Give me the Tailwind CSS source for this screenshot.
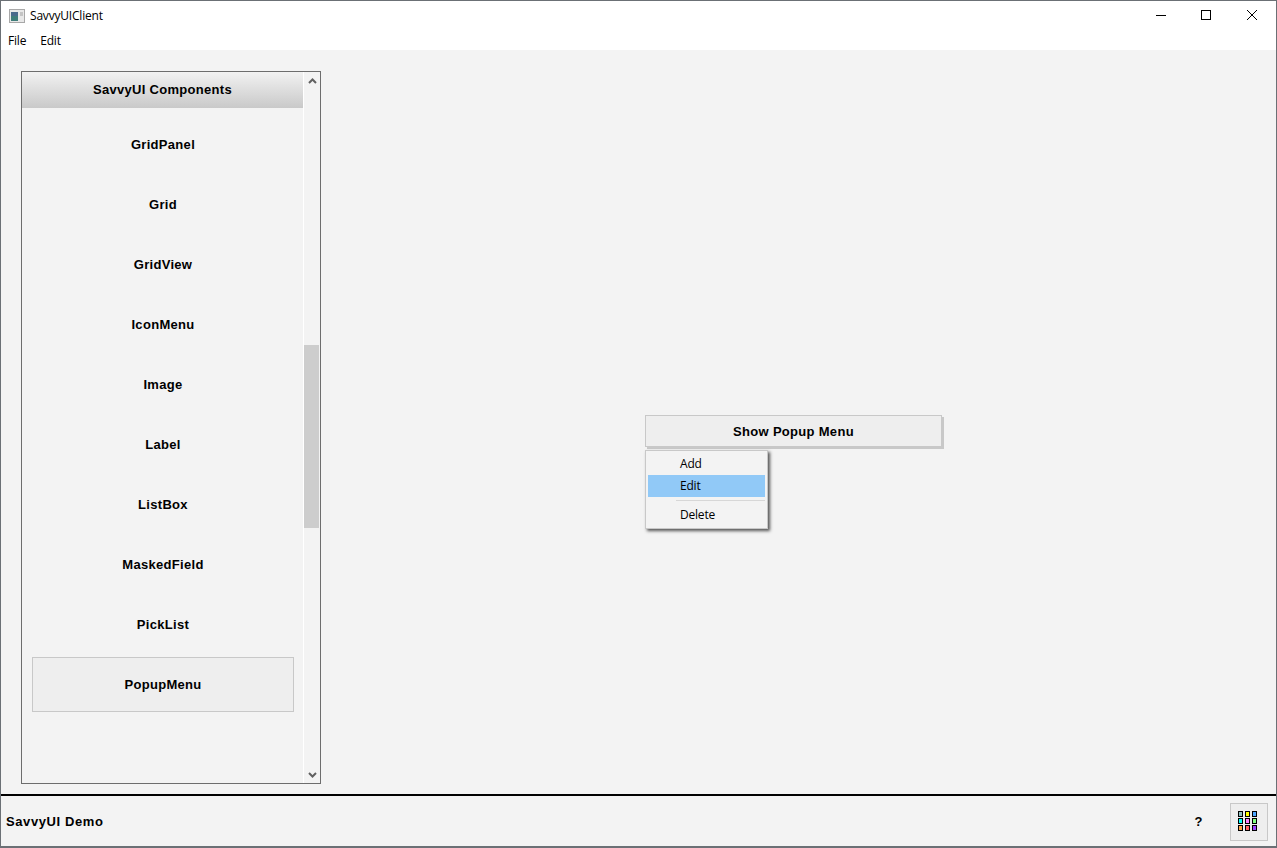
<!DOCTYPE html>
<html lang="en">
<head>
  <meta charset="UTF-8" />
  <title>SavvyUIClient</title>
  <script src="https://cdn.jsdelivr.net/npm/@tailwindcss/browser@4"></script>
</head>
<body class="bg-[#f3f3f3] overflow-hidden">
  <div class="relative w-[1277px] h-[848px] flex flex-col border border-[#6b7075] border-b-2 bg-[#f3f3f3] font-['Open_Sans','Liberation_Sans',sans-serif] text-[12px] tracking-[-0.2px] text-black">

    <!-- title bar -->
    <div class="h-[30px] flex items-center bg-white">
      <svg class="ml-[8px] mr-[5px]" width="16" height="14" viewBox="0 0 16 14">
        <rect x="0.5" y="0.5" width="15" height="13" fill="#e8e8e8" stroke="#a8a8a8" />
        <rect x="2" y="3" width="7" height="9" fill="#3f7d7a" />
        <rect x="2" y="3" width="7" height="4" fill="#4a6a8c" />
        <rect x="11" y="3" width="3" height="4" fill="#c4c4c4" />
      </svg>
      <span>SavvyUIClient</span>
      <div class="ml-auto flex items-center">
        <svg width="46" height="24" viewBox="0 0 46 24"><path d="M19 11.500h10" stroke="#000" /></svg>
        <svg width="46" height="24" viewBox="0 0 46 24"><rect x="18.500" y="6.500" width="9" height="9" fill="none" stroke="#000" /></svg>
        <svg class="mr-[1px]" width="46" height="24" viewBox="0 0 46 24"><path d="M18 6l10 10M28 6l-10 10" stroke="#000" /></svg>
      </div>
    </div>

    <!-- menu bar -->
    <div class="h-[19px] flex items-center gap-[14px] pl-[7px] bg-white">
      <span>File</span>
      <span>Edit</span>
    </div>

    <!-- main area -->
    <div class="flex-1 relative flex items-start pl-[20px] pt-[21px]">
      <div class="w-[300px] h-[713px] flex border border-[#6d6d6d] bg-[#f3f3f3]">
        <div class="w-[281px] flex flex-col font-['Liberation_Sans',sans-serif] font-bold text-[13px] tracking-[0.3px]">
          <div class="h-[36px] shrink-0 flex items-center justify-center bg-gradient-to-b from-[#f2f2f2] to-[#c9c9c9]">SavvyUI Components</div>
          <div class="flex flex-col gap-[5px] pt-[8.5px] pl-[10px] pr-[9px]">
            <div class="h-[55px] pt-[1px] flex items-center justify-center">GridPanel</div>
            <div class="h-[55px] pt-[1px] flex items-center justify-center">Grid</div>
            <div class="h-[55px] pt-[1px] flex items-center justify-center">GridView</div>
            <div class="h-[55px] pt-[1px] flex items-center justify-center">IconMenu</div>
            <div class="h-[55px] pt-[1px] flex items-center justify-center">Image</div>
            <div class="h-[55px] pt-[1px] flex items-center justify-center">Label</div>
            <div class="h-[55px] pt-[1px] flex items-center justify-center">ListBox</div>
            <div class="h-[55px] pt-[1px] flex items-center justify-center">MaskedField</div>
            <div class="h-[55px] pt-[1px] flex items-center justify-center">PickList</div>
            <div class="h-[55px] pt-[1px] flex items-center justify-center border border-[#c8c8c8] bg-[#eeeeee]">PopupMenu</div>
          </div>
        </div>
        <!-- scrollbar -->
        <div class="flex-1 flex flex-col border-l border-white">
          <div class="h-[17px] flex items-center justify-center">
            <svg width="9" height="6" viewBox="0 0 9 6"><path d="M1 5l3.500-3.500L8 5" fill="none" stroke="#606060" stroke-width="2" /></svg>
          </div>
          <div class="h-[256px]"></div>
          <div class="h-[183px] w-[15px] bg-[#cdcdcd]"></div>
          <div class="flex-1"></div>
          <div class="h-[17px] flex items-center justify-center">
            <svg width="9" height="6" viewBox="0 0 9 6"><path d="M1 1l3.500 3.500L8 1" fill="none" stroke="#606060" stroke-width="2" /></svg>
          </div>
        </div>
      </div>

      <!-- demo button and open popup -->
      <div class="absolute left-[644px] top-[365px] w-[297px] h-[32px] pt-[1px] flex items-center justify-center border border-[#c8c8c8] bg-[#eeeeee] shadow-[2px_2px_0_#c8c8c8] font-['Liberation_Sans',sans-serif] font-bold text-[13px] tracking-[0.3px]">Show Popup Menu</div>
      <div class="absolute left-[644px] top-[400px] w-[123px] h-[79px] border border-[#c8c8c8] bg-[#f3f3f3] p-[2px] shadow-[2px_2px_3px_#555]">
        <div class="h-[22px] flex items-center pl-[32px]">Add</div>
        <div class="h-[22px] flex items-center pl-[32px] bg-[#91c9f7]">Edit</div>
        <div class="h-px mt-[3px] ml-[28px] bg-[#d7d7d7]"></div>
        <div class="h-[27px] flex items-center pl-[32px]">Delete</div>
      </div>
    </div>

    <!-- footer -->
    <div class="h-[52px] shrink-0 pt-[1px] flex items-center border-t-2 border-black pl-[5px] font-['Liberation_Sans',sans-serif] font-bold text-[13px] tracking-[0.6px]">
      <span>SavvyUI Demo</span>
      <span class="ml-auto">?</span>
      <div class="ml-[27px] mr-[8px] w-[38px] h-[38px] pr-[3px] pb-[2px] flex items-center justify-center border border-[#c8c8c8] bg-[#eeeeee]">
        <div class="grid grid-cols-3 gap-x-[2px] gap-y-[1px]">
          <div class="w-[5px] h-[6px] border border-black bg-[#8fbcbc]"></div>
          <div class="w-[5px] h-[6px] border border-black bg-[#ffff00]"></div>
          <div class="w-[5px] h-[6px] border border-black bg-[#4da6ff]"></div>
          <div class="w-[5px] h-[6px] border border-black bg-[#00ffff]"></div>
          <div class="w-[5px] h-[6px] border border-black bg-[#ff80ff]"></div>
          <div class="w-[5px] h-[6px] border border-black bg-[#80ff80]"></div>
          <div class="w-[5px] h-[6px] border border-black bg-[#ffa040]"></div>
          <div class="w-[5px] h-[6px] border border-black bg-[#ff6060]"></div>
          <div class="w-[5px] h-[6px] border border-black bg-[#a040ff]"></div>
        </div>
      </div>
    </div>
  </div>
</body>
</html>
